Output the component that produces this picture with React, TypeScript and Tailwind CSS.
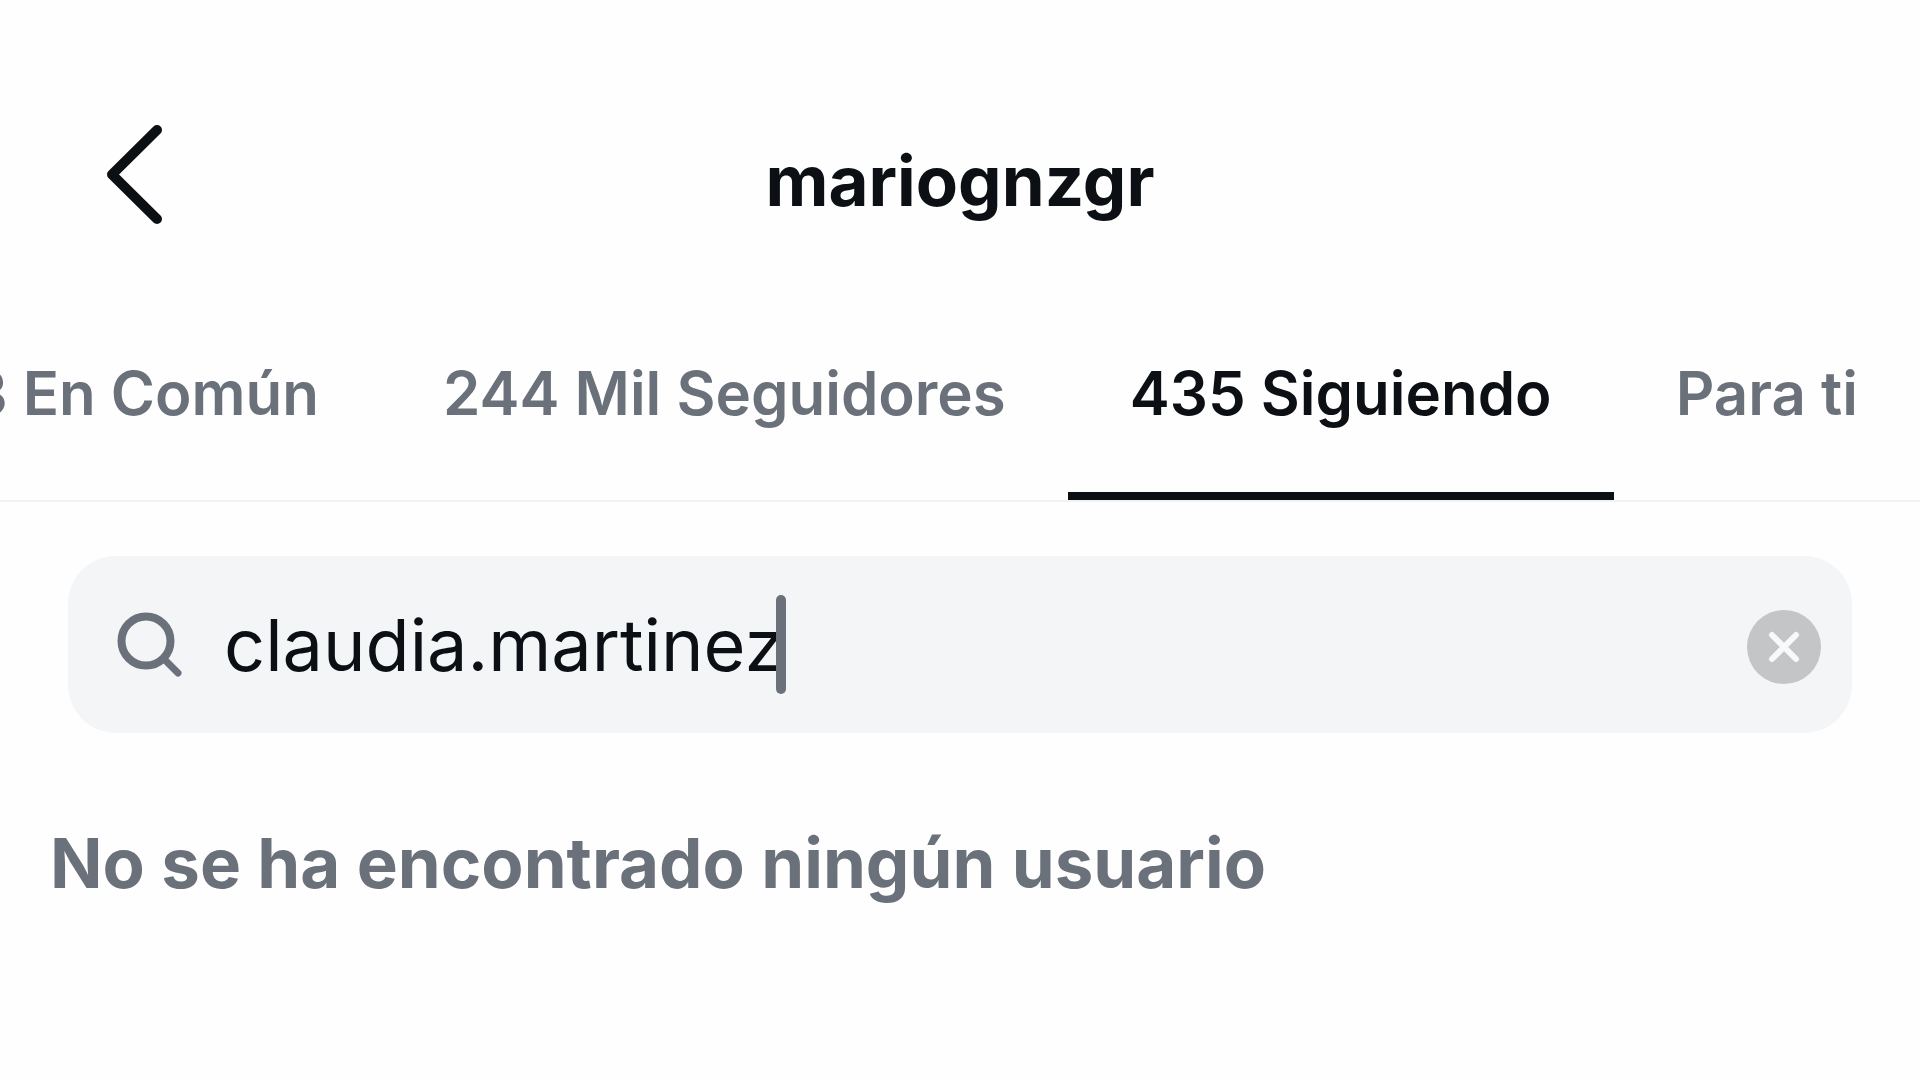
import React, { useState } from 'react';

const tabs = ['3 En Común', '244 Mil Seguidores', '435 Siguiendo', 'Para ti'];

export default function App() {
  const [active, setActive] = useState('435 Siguiendo');

  return (
    <main className="min-h-screen overflow-hidden bg-[#fefefe] font-['Inter',sans-serif] text-[#0c1014]">
      <Header username="mariognzgr" />
      <nav className="flex justify-end border-b-2 border-[#f1f2f4]">
        {tabs.map((tab) => (
          <Tab key={tab} label={tab} active={tab === active} onSelect={() => setActive(tab)} />
        ))}
      </nav>
      <SearchBox />
      <p className="mt-[90px] px-[50px] text-[69px] leading-[80px] font-bold text-[#6b717a]">
        No se ha encontrado ningún usuario
      </p>
    </main>
  );
}

function Header({ username }: { username: string }) {
  return (
    <header className="grid grid-cols-[1fr_auto_1fr] items-center px-[100px] pt-[120px] pb-[100px]">
      <button type="button" aria-label="Atrás" className="justify-self-start">
        <svg width="66" height="110" viewBox="0 0 66 110" fill="none" stroke="currentColor" strokeWidth="10" strokeLinecap="round" strokeLinejoin="round">
          <path d="M57 10L12 54.500L57 99" />
        </svg>
      </button>
      <h1 className="pt-3 text-[69px] leading-[80px] font-bold">{username}</h1>
    </header>
  );
}

function Tab({ label, active, onSelect }: {
  label: string;
  active: boolean;
  onSelect: () => void;
}) {
  return (
    <button
      type="button"
      onClick={onSelect}
      className={`shrink-0 border-b-8 px-[62px] pt-[27px] pb-[63px] text-[60px] leading-[72px] font-semibold whitespace-nowrap ${
        active ? 'border-[#0c1014]' : 'border-transparent text-[#6b717a]'
      }`}
    >
      {label}
    </button>
  );
}

function SearchBox() {
  const [query, setQuery] = useState('claudia.martinez');

  return (
    <div className="mx-[68px] mt-[54px] flex h-[177px] items-center rounded-[48px] bg-[#f3f5f7] pr-[31px] pl-[47px]">
      <svg width="68" height="68" viewBox="0 0 68 68" fill="none" stroke="#6b717a" strokeWidth="8" strokeLinecap="round">
        <circle cx="31" cy="30" r="24.500" />
        <path d="M49 48L63 62" strokeWidth="7" />
      </svg>
      <input
        type="text"
        aria-label="Buscar"
        value={query}
        onChange={(e) => setQuery(e.target.value)}
        className="ml-[41px] field-sizing-content text-[72px] leading-[88px] caret-transparent outline-none"
      />
      <span className="-ml-2 h-[99px] w-[10px] rounded-full bg-[#6b717a]" />
      <button
        type="button"
        aria-label="Borrar"
        onClick={() => setQuery('')}
        className="mt-1 ml-auto flex size-[74px] items-center justify-center rounded-full bg-[#c4c5c7]"
      >
        <svg width="34" height="34" viewBox="0 0 34 34" stroke="#f8f9fa" strokeWidth="6" strokeLinecap="round">
          <path d="M5 5L29 29M29 5L5 29" />
        </svg>
      </button>
    </div>
  );
}
